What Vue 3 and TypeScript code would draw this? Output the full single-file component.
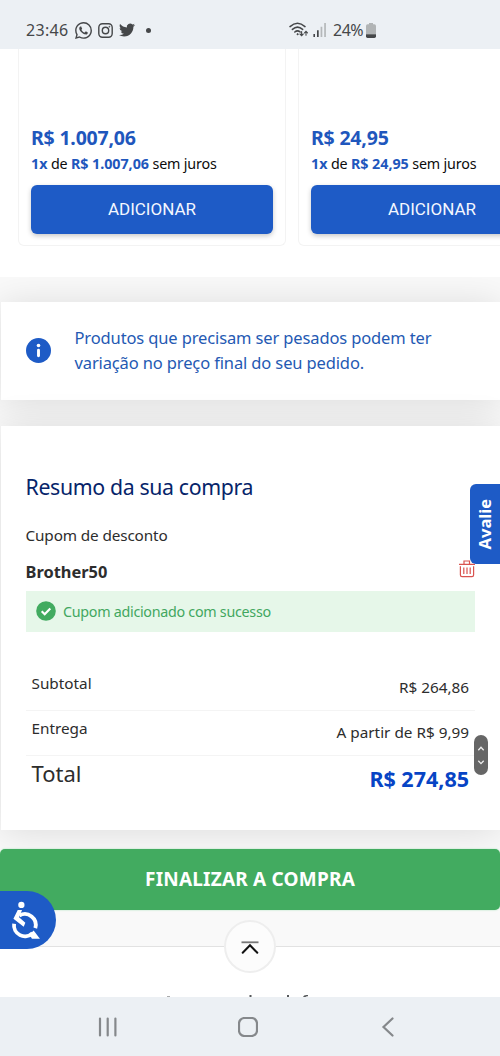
<script setup lang="ts">
interface Product { id: number; price: string }
interface SummaryRow { label: string; value: string; total?: boolean }

const products: Product[] = [
  { id: 1, price: 'R$ 1.007,06' },
  { id: 2, price: 'R$ 24,95' },
]

const summary: SummaryRow[] = [
  { label: 'Subtotal', value: 'R$ 264,86' },
  { label: 'Entrega', value: 'A partir de R$ 9,99' },
  { label: 'Total', value: 'R$ 274,85', total: true },
]
</script>

<template>
  <div class="screen">
    <header class="status">
      <span class="clock">23:46</span>
      <svg class="whatsapp" viewBox="0 0 24 24" fill="#454749"><path d="M17.472 14.382c-.297-.149-1.758-.867-2.03-.967-.273-.099-.471-.148-.67.15-.197.297-.767.966-.94 1.164-.173.199-.347.223-.644.075-.297-.15-1.255-.463-2.39-1.475-.883-.788-1.48-1.761-1.653-2.059-.173-.297-.018-.458.13-.606.134-.133.298-.347.446-.52.149-.174.198-.298.298-.497.099-.198.05-.371-.025-.52-.075-.149-.669-1.612-.916-2.207-.242-.579-.487-.5-.669-.51-.173-.008-.371-.01-.57-.01-.198 0-.52.074-.792.372-.272.297-1.04 1.016-1.04 2.479 0 1.462 1.065 2.875 1.213 3.074.149.198 2.096 3.2 5.077 4.487.709.306 1.262.489 1.694.625.712.227 1.36.195 1.871.118.571-.085 1.758-.719 2.006-1.413.248-.694.248-1.289.173-1.413-.074-.124-.272-.198-.57-.347m-5.421 7.403h-.004a9.87 9.87 0 01-5.031-1.378l-.361-.214-3.741.982.998-3.648-.235-.374a9.86 9.86 0 01-1.51-5.26c.001-5.45 4.436-9.884 9.888-9.884 2.64 0 5.122 1.03 6.988 2.898a9.825 9.825 0 012.893 6.994c-.003 5.45-4.437 9.884-9.885 9.884m8.413-18.297A11.815 11.815 0 0012.05 0C5.495 0 .16 5.335.157 11.892c0 2.096.547 4.142 1.588 5.945L.057 24l6.305-1.654a11.882 11.882 0 005.683 1.448h.005c6.554 0 11.89-5.335 11.893-11.893a11.821 11.821 0 00-3.48-8.413z" /></svg>
      <svg class="instagram" viewBox="0 0 15 15" fill="none" stroke="#454749" stroke-width="1.4"><rect x=".8" y=".8" width="13.4" height="13.4" rx="3.6" /><circle cx="7.5" cy="7.5" r="3.2" /><circle cx="11.4" cy="3.7" r=".5" fill="#454749" stroke-width=".6" /></svg>
      <svg class="twitter" viewBox="0 0 24 24" fill="#454749"><path d="M23.953 4.57a10 10 0 01-2.825.775 4.958 4.958 0 002.163-2.723c-.951.555-2.005.959-3.127 1.184a4.92 4.92 0 00-8.384 4.482C7.69 8.095 4.067 6.13 1.64 3.162a4.822 4.822 0 00-.666 2.475c0 1.71.87 3.213 2.188 4.096a4.904 4.904 0 01-2.228-.616v.06a4.923 4.923 0 003.946 4.827 4.996 4.996 0 01-2.212.085 4.936 4.936 0 004.604 3.417 9.867 9.867 0 01-6.102 2.105c-.39 0-.779-.023-1.17-.067a13.995 13.995 0 007.557 2.209c9.053 0 13.998-7.496 13.998-13.985 0-.21 0-.42-.015-.63A9.935 9.935 0 0024 4.59z" /></svg>
      <i class="dot"></i>
      <svg class="wifi" viewBox="0 0 20 16" fill="none" stroke="#454749" stroke-width="1.5" stroke-linecap="round"><path d="M1 4.6Q8.5-2.2 16 4.6M3.4 7.4Q8.5 2.8 13.6 7.4M5.8 10Q8.5 7.7 11.2 10" /><circle cx="8.5" cy="12.2" r=".6" fill="#454749" stroke-width=".8" /><path d="M12.6 9.6v3.8M11 12l1.6 1.7 1.6-1.7M17 13.2V9.4M15.5 10.8L17 9.2l1.5 1.6" stroke-width="1.1" /></svg>
      <svg class="signal" viewBox="0 0 14 14"><path d="M.4 11h1.6v3H.4zM4 7.3h1.7V14H4z" fill="#454749" /><path d="M7.6 3.8h1.7V14H7.6zM11.2 0h1.7v14h-1.7z" fill="#b5b8ba" /></svg>
      <span class="battery-text">24%</span>
      <svg class="battery" viewBox="0 0 10 15"><path d="M3 0h4v1.3h1.4Q10 1.3 10 3v8.3H0V3Q0 1.3 1.6 1.3H3z" fill="#b1b4b5" /><path d="M0 11.2h10v2Q10 15 8.400 15H1.600Q0 15 0 13.200z" fill="#454749" /></svg>
    </header>

    <section class="products">
      <article v-for="p in products" :key="p.id" class="product">
        <div class="price">{{ p.price }}</div>
        <div class="installment"><b>1x</b> de <b>{{ p.price }}</b> sem juros</div>
        <button class="add">ADICIONAR</button>
      </article>
    </section>

    <main class="cart">
      <section class="card notice">
        <svg viewBox="0 0 24 24"><circle cx="12" cy="12" r="12" fill="#1e5bc6" /><circle cx="12" cy="7.2" r="1.75" fill="#fff" /><path d="M12 11.8v5.3" stroke="#fff" stroke-width="2.8" stroke-linecap="round" /></svg>
        <p>Produtos que precisam ser pesados podem ter<br />variação no preço final do seu pedido.</p>
      </section>

      <section class="card summary">
        <h2>Resumo da sua compra</h2>
        <div class="coupon-label">Cupom de desconto</div>
        <div class="coupon">
          <strong>Brother50</strong>
          <svg viewBox="0 0 16 18" fill="none" stroke="#d9534f" stroke-width="1.2"><path d="M0 4.300h16M5 4V1h5.500v3M1.400 6.300v8.700q0 1.700 1.700 1.700h9.800q1.700 0 1.700-1.700V6.300" /><path d="M4.800 7.500v6.500M8 7.500v6.500M11.200 7.500v6.500" stroke-width="1.200" /></svg>
        </div>
        <div class="success">
          <svg viewBox="0 0 20 20"><circle cx="10" cy="10" r="9.800" fill="#42ab60" /><path d="M5.700 10.300l3 2.900 5.600-5.700" fill="none" stroke="#fff" stroke-width="2.200" /></svg>
          <span>Cupom adicionado com sucesso</span>
        </div>
        <dl>
          <div v-for="r in summary" :key="r.label" class="row" :class="{ total: r.total }">
            <dt>{{ r.label }}</dt>
            <dd>{{ r.value }}</dd>
          </div>
        </dl>
      </section>

      <button class="checkout">FINALIZAR A COMPRA</button>
    </main>

    <footer class="footer">
      <svg class="heading-edge" viewBox="0 0 150 2" fill="#55585a"><path d="M3 1h3v1H3z" opacity=".5" /><path d="M85.500 0h2v2h-2zM123 0h2v2h-2zM139 2q.5-2 3.500-2h1.500v1.200q-2-.2-2.500.8z" /></svg>
      <button class="to-top" aria-label="Voltar ao topo">
        <svg viewBox="0 0 18 13" fill="none"><path d="M.5 1.300h17" stroke="#777" stroke-width="1.800" /><path d="M1.700 11.800L9 4.200l7.300 7.600" stroke="#111" stroke-width="2" stroke-linecap="round" /></svg>
      </button>
    </footer>

    <nav class="navbar">
      <svg viewBox="0 0 20 20"><path d="M2 1.500v17M9.700 1.500v17M17.400 1.500v17" /></svg>
      <svg viewBox="0 0 20 20"><rect x="1" y="1" width="18" height="18" rx="5.500" /></svg>
      <svg viewBox="0 0 20 20"><path d="M14.500 1.500L5.500 10l9 8.500" /></svg>
    </nav>

    <button class="feedback"><span>Avalie</span></button>
    <div class="scroll-handle">
      <svg viewBox="0 0 14 40" fill="none" stroke="#eee" stroke-width="1.300"><path d="M4.300 15.200L7 12.300l2.700 2.900M4.300 25.700L7 28.600l2.700-2.900" /></svg>
    </div>
    <button class="access" aria-label="Acessibilidade">
      <svg viewBox="0 153 168 175" fill="none" stroke="#fff" stroke-width="11.500">
        <circle cx="64" cy="195" r="9.500" fill="#fff" stroke="none" />
        <path d="M53 210h13l-9 22 19 17-5 12-31-24z" fill="#fff" stroke="none" />
        <path d="M58 227A33 33 0 0 1 106 265" />
        <path d="M42 252A33 33 0 0 0 98 280" />
        <path d="M88 285l13-13 19 25H96z" fill="#fff" stroke="none" />
      </svg>
    </button>
  </div>
</template>

<style>
body { margin: 0; background: #fff; }
</style>

<style scoped>
.screen { position: relative; width: 500px; height: 1056px; overflow: hidden; display: flex; flex-direction: column; background: #fff; color: #2d2d2d; font-family: "Noto Sans", sans-serif; }
button { border: 0; padding: 0; margin: 0; font-family: inherit; }
svg { display: block; flex: none; }

.status { height: 49px; flex: none; box-sizing: border-box; padding: 11px 0 0 26px; display: flex; align-items: center; background: #ecf0f4; color: #454749; font-size: 16px; line-height: 24px; z-index: 2; }
.clock { width: 49px; letter-spacing: .3px; }
.whatsapp { width: 17px; height: 17px; }
.instagram { width: 15px; height: 15px; margin-left: 6px; }
.twitter { width: 16px; height: 16px; margin-left: 6px; }
.dot { width: 5px; height: 5px; margin-left: 11px; border-radius: 50%; background: #454749; }
.wifi { width: 20px; height: 16px; margin-left: 138px; }
.signal { width: 14px; height: 14px; margin-left: 4px; }
.battery-text { width: 32px; margin-left: 6px; letter-spacing: -.5px; }
.battery { width: 10px; height: 15px; margin-left: 1px; }

.products { height: 228px; flex: none; display: flex; align-items: flex-start; gap: 12px; padding-left: 18px; background: #fff; z-index: 1; }
.product { width: 268px; height: 197px; flex: none; box-sizing: border-box; padding: 76px 12px 0; border: solid #f3f3f3; border-width: 0 1px 1px; border-radius: 0 0 6px 6px; }
.price { font-size: 19.500px; line-height: 26px; font-weight: 700; letter-spacing: -.2px; color: #1f57bd; }
.installment { font-size: 14.300px; line-height: 26px; letter-spacing: -.16px; color: #0c0c0c; white-space: nowrap; }
.installment b { color: #1f57bd; letter-spacing: -.05px; }
.add { display: block; width: 242px; height: 49px; margin-top: 7.500px; border-radius: 6px; background: #1e5bc6; color: #f3f7ff; font: 400 17px/49px Roboto, sans-serif; box-shadow: 0 2px 5px rgba(0, 0, 0, .22); }

.cart { height: 669px; flex: none; background: #f9f9f9; }
.card { position: relative; margin-left: 1px; box-sizing: border-box; background: #fff; box-shadow: 0 2px 36px rgba(0, 0, 0, .12); }
.notice { margin-top: 24.500px; height: 98px; display: flex; align-items: center; padding-left: 24.500px; }
.notice svg { width: 25px; height: 25px; }
.notice p { margin: 0 0 0 24px; font-size: 16.500px; line-height: 24.300px; letter-spacing: -.13px; white-space: nowrap; color: #2459b3; }
.summary { margin-top: 26px; height: 404px; padding: 46px 25px 0 24.500px; }
h2 { margin: 0; font-size: 21.300px; line-height: 30px; font-weight: 400; letter-spacing: -.36px; color: #06246a; }
.coupon-label { margin-top: 21px; font-size: 15.300px; line-height: 24px; letter-spacing: -.13px; }
.coupon { display: flex; justify-content: space-between; align-items: center; height: 26px; margin-top: 12px; font-size: 16.400px; line-height: 26px; }
.coupon svg { width: 16px; height: 18px; margin-top: -6px; }
.success { display: flex; align-items: center; height: 41px; margin-top: 6px; padding-left: 10.500px; background: #e6f7e9; color: #42a75f; font-size: 14.300px; line-height: 20px; letter-spacing: -.28px; }
.success svg { width: 20px; height: 20px; margin-right: 7px; }
.success span { margin-top: 1px; }
dl { margin: 34px 0 0; }
.row { display: flex; justify-content: space-between; box-sizing: border-box; height: 45px; padding: 0 6px; border-bottom: 1.500px solid #f4f4f4; font-size: 15.300px; line-height: 24px; }
dt { padding-top: 5.500px; }
dd { margin: 0; padding-top: 9px; }
.row.total { border: 0; font-size: 21.500px; line-height: 30px; }
.total dt { padding-top: 2.500px; font-size: 22px; }
.total dd { padding-top: 8.500px; font-weight: 700; color: #0744c5; }
.checkout { position: relative; display: block; width: 500px; height: 61px; margin-top: 19px; border-radius: 5px; background: #42ab60; color: #fff; font-size: 19px; line-height: 61px; font-weight: 700; letter-spacing: .21px; box-shadow: 0 0 2px #a5dfb6; }

.footer { position: relative; flex: none; height: 51px; box-sizing: border-box; border-top: 1px solid #e2e2e2; }
.to-top { position: absolute; left: 224px; top: -27px; width: 52px; height: 53px; display: grid; place-items: center; box-sizing: border-box; border: 2px solid #eee; border-radius: 50%; background: #fcfcfc; }
.to-top svg { width: 18px; height: 13px; margin-top: 2px; }
.heading-edge { position: absolute; left: 164px; bottom: 0; width: 150px; height: 2px; }

.navbar { flex: none; height: 59px; display: flex; align-items: center; justify-content: space-between; box-sizing: border-box; padding: 1px 102px 0 98px; background: #ecf0f4; }
.navbar svg { width: 20px; height: 20px; fill: none; stroke: #85888b; stroke-width: 2.200; stroke-linecap: round; }

.feedback { position: absolute; left: 470px; top: 484px; width: 36px; height: 80px; display: flex; align-items: center; justify-content: center; padding-right: 6px; box-sizing: border-box; border-radius: 6px; background: #1e5bc6; color: #fff; font-size: 16.500px; font-weight: 700; }
.feedback span { writing-mode: vertical-rl; transform: rotate(180deg); line-height: 24px; }
.scroll-handle { position: absolute; left: 474px; top: 735px; width: 14px; height: 40px; border-radius: 7px; background: #666; }
.scroll-handle svg { width: 14px; height: 40px; }
.access { position: absolute; left: 0; top: 891px; width: 56px; height: 58px; border-radius: 0 29px 29px 0; background: #1e5bc6; }
.access svg { width: 56px; height: 58px; }
</style>
